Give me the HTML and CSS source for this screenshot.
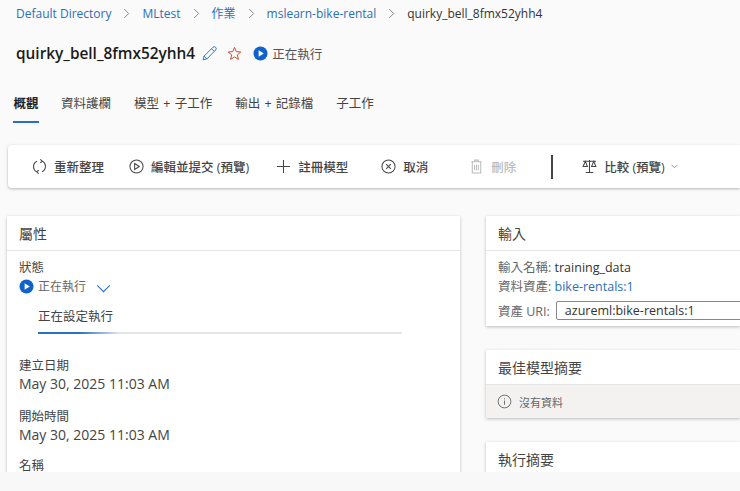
FILE: index.html
```html
<!DOCTYPE html>
<html lang="zh-Hant">
<head>
<meta charset="utf-8">
<title>quirky_bell_8fmx52yhh4</title>
<link rel="stylesheet" href="styles.css">
</head>
<body>
<main class="page">
  <nav class="crumbs">
    <a class="crumb">Default Directory</a>
    <svg class="crumb-sep" viewBox="0 0 8 12"><path d="M1.5 1l5 5-5 5"/></svg>
    <a class="crumb">MLtest</a>
    <svg class="crumb-sep" viewBox="0 0 8 12"><path d="M1.5 1l5 5-5 5"/></svg>
    <a class="crumb">作業</a>
    <svg class="crumb-sep" viewBox="0 0 8 12"><path d="M1.5 1l5 5-5 5"/></svg>
    <a class="crumb">mslearn-bike-rental</a>
    <svg class="crumb-sep" viewBox="0 0 8 12"><path d="M1.5 1l5 5-5 5"/></svg>
    <span class="crumb-current">quirky_bell_8fmx52yhh4</span>
  </nav>

  <header class="title-row">
    <h1 class="title">quirky_bell_8fmx52yhh4</h1>
    <svg class="icon-edit" viewBox="0 0 16 16"><path d="M1.2 14.8l1-4L11.6 1.4a1.9 1.9 0 0 1 2.9 2.9L5.2 13.800z M10.2 2.900l2.900 2.900 M2.200 10.800l3 3"/></svg>
    <svg class="icon-star" viewBox="0 0 16 16"><path d="M8 1.500l1.900 4.500 4.800.4-3.700 3.100 1.200 4.800L8 11.700l-4.200 2.600L5 9.500 1.300 6.400l4.800-.4z"/></svg>
    <svg class="icon-run" viewBox="0 0 16 16"><circle cx="8" cy="8" r="7.500"/><path d="M6 4.500l5.500 3.500L6 11.500z"/></svg>
    <span class="run-text">正在執行</span>
  </header>

  <div class="tabs">
    <span class="tab tab-active">概觀</span>
    <span class="tab">資料護欄</span>
    <span class="tab">模型 + 子工作</span>
    <span class="tab">輸出 + 記錄檔</span>
    <span class="tab">子工作</span>
  </div>

  <div class="toolbar">
    <button class="tool tool-refresh">
      <svg class="tool-icon" viewBox="0 0 16 16"><path d="M5.300 2.400A6.300 6.300 0 0 0 5 13.700 M10.700 13.600A6.300 6.300 0 0 0 11 2.300 M8.800.4L11 2.300 8.800 4.200 M7.200 11.800L5 13.700l2.200 1.900"/></svg>
      重新整理
    </button>
    <button class="tool tool-submit">
      <svg class="tool-icon" viewBox="0 0 16 16"><circle cx="8" cy="8" r="7"/><path d="M6 4.800L11 8l-5 3.200z"/></svg>
      編輯並提交 (預覽)
    </button>
    <button class="tool tool-register">
      <svg class="tool-icon" viewBox="0 0 16 16"><path d="M8 1v14M1 8h14"/></svg>
      註冊模型
    </button>
    <button class="tool tool-cancel">
      <svg class="tool-icon" viewBox="0 0 16 16"><circle cx="8" cy="8" r="7"/><path d="M5.500 5.500l5 5M10.500 5.500l-5 5"/></svg>
      取消
    </button>
    <button class="tool tool-delete">
      <svg class="tool-icon" viewBox="0 0 16 16"><path d="M2.500 3h11M6 3V1.200h4V3M3.500 3v12h9V3M6 6v6M8 6v6M10 6v6"/></svg>
      刪除
    </button>
    <span class="tool-divider"></span>
    <button class="tool tool-compare">
      <svg class="tool-icon" viewBox="0 0 16 16"><path d="M1 2.500h14M8 1v13M4 14.500h8M3.500 2.500L1.200 8h4.600zM12.500 2.500L10.200 8h4.600z"/></svg>
      比較 (預覽)
      <svg class="chev-small" viewBox="0 0 8 5"><path d="M.5.500L4 4 7.500.500"/></svg>
    </button>
  </div>

  <div class="columns">
    <section class="card card-props">
      <h2 class="card-head">屬性</h2>
      <div class="card-body">
        <div class="field-label">狀態</div>
        <div class="status-row">
          <svg class="icon-run icon-run-sm" viewBox="0 0 16 16"><circle cx="8" cy="8" r="7.500"/><path d="M6 4.500l5.500 3.500L6 11.500z"/></svg>
          <span class="status-text">正在執行</span>
          <svg class="chev-blue" viewBox="0 0 16 10"><path d="M1 1.500l7 7 7-7"/></svg>
        </div>
        <div class="step-label">正在設定執行</div>
        <div class="progress"><div class="progress-fill"></div></div>
        <div class="field field-first">
          <div class="field-label">建立日期</div>
          <div class="field-value">May 30, 2025 11:03 AM</div>
        </div>
        <div class="field">
          <div class="field-label">開始時間</div>
          <div class="field-value">May 30, 2025 11:03 AM</div>
        </div>
        <div class="field field-name">
          <div class="field-label">名稱</div>
        </div>
      </div>
    </section>

    <div class="side">
      <section class="card card-input">
        <h2 class="card-head">輸入</h2>
        <div class="input-body">
          <div class="kv"><span class="kv-key">輸入名稱:</span> <span class="kv-dark">training_data</span></div>
          <div class="kv"><span class="kv-key">資料資產:</span> <a class="link">bike-rentals:1</a></div>
          <div class="uri-row">
            <span class="kv-key uri-label">資產 URI:</span>
            <div class="uri-box">azureml:bike-rentals:1</div>
          </div>
        </div>
      </section>

      <section class="card card-best">
        <h2 class="card-head">最佳模型摘要</h2>
        <div class="notice">
          <svg class="icon-info" viewBox="0 0 16 16"><circle cx="8" cy="8" r="6.800"/><path d="M8 7v4.500M8 4.500v1.200"/></svg>
          <span>沒有資料</span>
        </div>
      </section>

      <section class="card card-summary">
        <h2 class="card-head">執行摘要</h2>
      </section>
    </div>
  </div>
</main>
<div class="bottom-strip"></div>
</body>
</html>
```

FILE: styles.css
```css
* { box-sizing: border-box; }
html, body {
  margin: 0;
  height: 491px;
  overflow: hidden;
  background: #f8f8f8;
}
body {
  font-family: "Open Sans", "Noto Sans CJK TC", sans-serif;
  color: #333;
  font-size: 12.5px;
}
.page {
  height: 472px;
  overflow: hidden;
  background: #fafafa;
}
.bottom-strip { height: 19px; background: #f8f8f8; }

.crumbs {
  display: flex;
  align-items: center;
  height: 26px;
  padding-left: 16px;
  font-size: 12px;
}
.crumb { color: #2a6fb8; }
.crumb-current { color: #333; }
.crumb-sep {
  width: 7px;
  height: 11px;
  margin: 0 12px;
  fill: none;
  stroke: #777;
  stroke-width: 1;
}

.title-row {
  display: flex;
  align-items: center;
  height: 30px;
  margin-top: 12px;
  padding-left: 16px;
}
.title {
  margin: 0;
  font-size: 15.4px;
  font-weight: 600;
  color: #1b1b1b;
}
.icon-edit {
  width: 15px;
  height: 15px;
  margin-left: 7px;
  fill: none;
  stroke: #2a70c0;
  stroke-width: 1;
}
.icon-star {
  width: 15px;
  height: 15px;
  margin-left: 10px;
  fill: none;
  stroke: #c8452a;
  stroke-width: 1;
}
.icon-run {
  width: 15px;
  height: 15px;
  margin-left: 11px;
  fill: #0f62cc;
}
.icon-run path { fill: #fff; }
.icon-run-sm { margin-left: 0; }
.run-text { margin-left: 4px; color: #555; }

.tabs {
  display: flex;
  height: 35px;
  margin-top: 20px;
  padding-left: 13px;
  gap: 23px;
  word-spacing: 1px;
}
.tab {
  color: #444;
  height: 35px;
  line-height: 31px;
}
.tab-active {
  margin-right: -1px;
  padding: 0 0.5px;
  font-weight: 600;
  color: #222;
  border-bottom: 2px solid #2a70c0;
}

.toolbar {
  display: flex;
  align-items: center;
  height: 43px;
  margin: 22px 0 0 8px;
  padding-left: 24px;
  background: #fff;
  border-radius: 4px 0 0 4px;
  box-shadow: 0 1px 3px rgba(0, 0, 0, 0.28);
}
.tool {
  display: flex;
  align-items: center;
  padding: 0;
  border: 0;
  background: none;
  font: inherit;
  font-weight: 500;
  color: #444;
}
.tool-icon {
  width: 15px;
  height: 15px;
  margin-right: 7px;
  fill: none;
  stroke: #444;
  stroke-width: 1.1;
}
.tool-submit { margin-left: 25px; }
.tool-register { margin-left: 27px; }
.tool-cancel { margin-left: 33px; }
.tool-delete { margin-left: 41px; color: #bbb; }
.tool-delete .tool-icon { stroke: #bbb; }
.tool-divider {
  width: 2px;
  height: 24px;
  margin-left: 35px;
  background: #444;
}
.tool-compare { margin-left: 29px; }
.chev-small {
  width: 7px;
  height: 5px;
  margin-left: 6px;
  fill: none;
  stroke: #888;
  stroke-width: 1;
}

.columns {
  display: flex;
  align-items: flex-start;
  gap: 26px;
  margin: 28px 0 0 7px;
}
.card {
  background: #fff;
  box-shadow: 0 1px 3px rgba(0, 0, 0, 0.25);
}
.card-props { width: 453px; height: 320px; }
.card-head {
  margin: 0;
  height: 35px;
  padding-left: 12px;
  line-height: 35px;
  font-size: 14px;
  font-weight: 400;
  color: #444;
  border-bottom: 1px solid #e6e6e6;
}
.card-body { padding: 8px 12px; }
.field-label { line-height: 18px; color: #444; }
.status-row {
  display: flex;
  align-items: center;
  height: 18px;
}
.status-text { margin-left: 4px; font-size: 12px; color: #666; }
.chev-blue {
  width: 15px;
  height: 9px;
  margin: 5px 0 0 10px;
  fill: none;
  stroke: #2a70c0;
  stroke-width: 1.2;
}
.step-label {
  margin: 13px 0 0 19px;
  line-height: 18px;
  color: #444;
}
.progress {
  width: 364px;
  height: 2px;
  margin: 6px 0 0 19px;
  background: #e6e6ea;
}
.progress-fill {
  width: 82px;
  height: 2px;
  background: linear-gradient(90deg, #2a70c0 0, #2a70c0 50%, #e6e6ea 100%);
}
.field { margin-top: 15px; }
.field-first { margin-top: 23px; }
.field-name { margin-top: 13px; }
.field-value {
  font-size: 14px;
  line-height: 18px;
  color: #444;
}

.side {
  display: flex;
  flex-direction: column;
  flex: 1;
  min-width: 0;
  gap: 24px;
}
.input-body { padding: 7px 0 0 12px; }
.card-input { height: 110px; }
.kv { line-height: 19px; }
.kv-key { color: #666; }
.kv-dark { color: #333; }
.link { color: #2a70c0; }
.uri-row {
  display: flex;
  align-items: center;
  margin-top: 5px;
}
.uri-label { flex: none; white-space: nowrap; }
.uri-box {
  flex: none;
  width: 220px;
  height: 19px;
  margin-left: 6px;
  padding-left: 8px;
  line-height: 17px;
  color: #333;
  border: 1px solid #888;
  border-radius: 2px;
}
.card-best { height: 68px; }
.notice {
  display: flex;
  align-items: center;
  height: 33px;
  padding-left: 11px;
  gap: 7px;
  font-size: 11px;
  color: #666;
  background: #f3f2f1;
}
.icon-info {
  width: 15px;
  height: 15px;
  fill: none;
  stroke: #666;
  stroke-width: 1;
}
.card-summary { height: 60px; }
```
